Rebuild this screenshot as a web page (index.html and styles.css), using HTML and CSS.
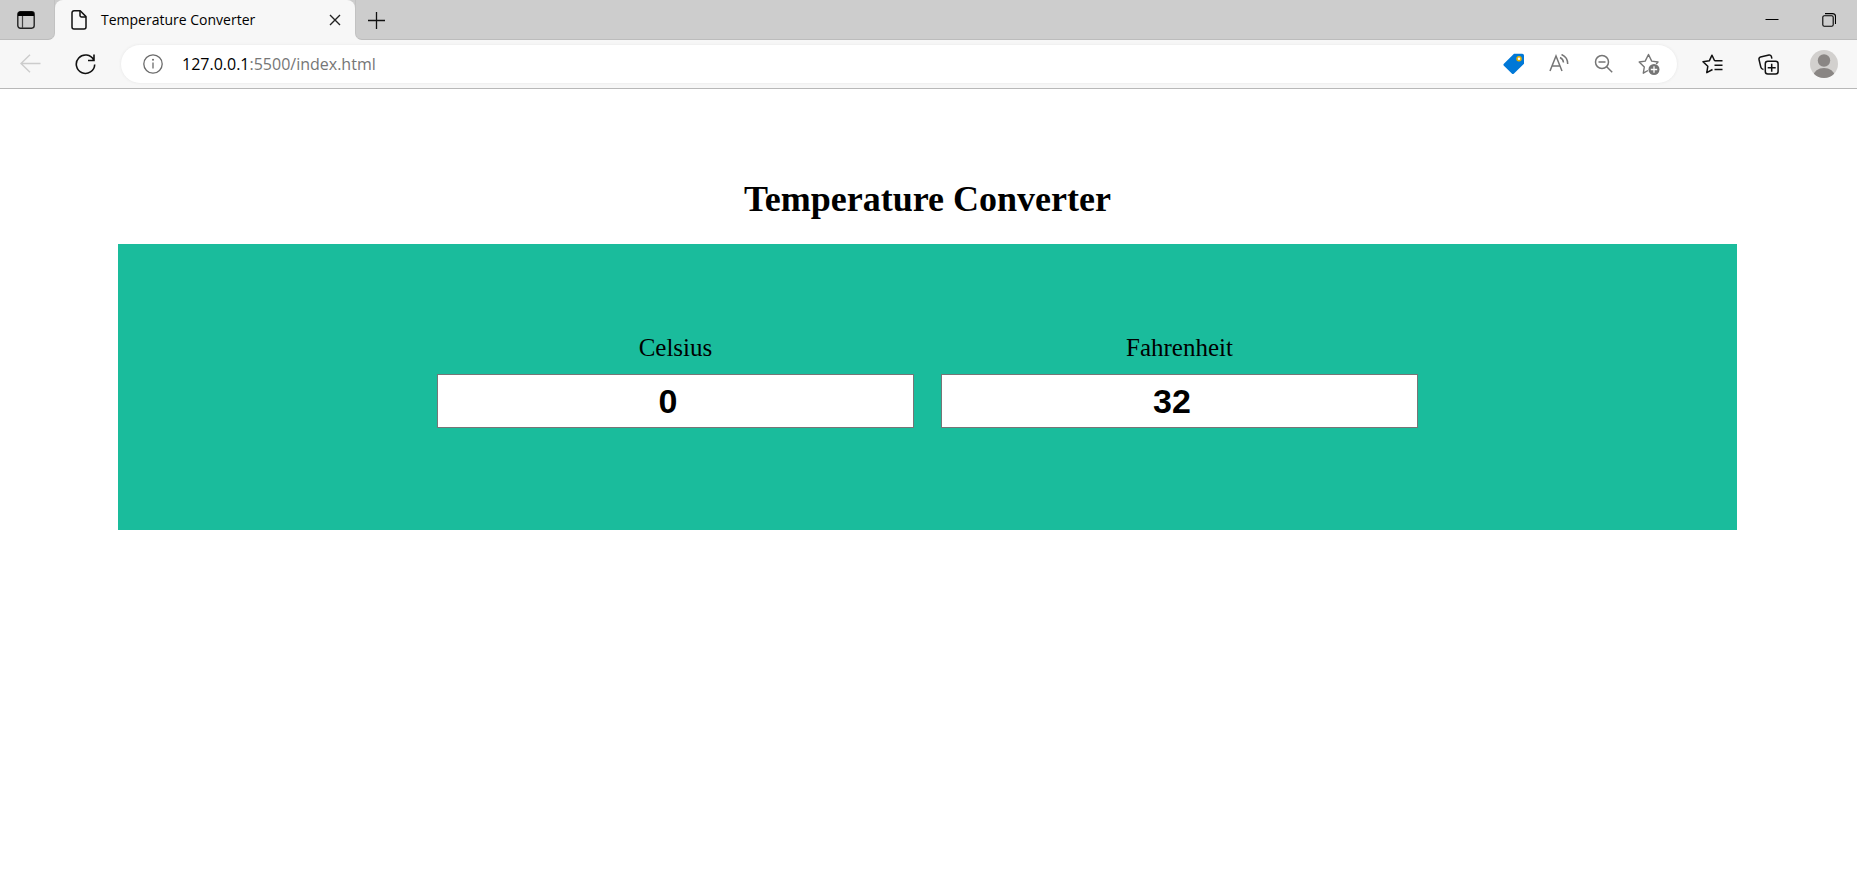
FILE: index.html
```html
<!DOCTYPE html>
<html lang="en">
<head>
<meta charset="utf-8">
<title>Temperature Converter</title>
<link rel="stylesheet" href="styles.css">
</head>
<body>
<header class="browser">
  <div class="tab-strip">
    <div class="strip-start">
      <button class="icon-button" type="button" aria-label="Tab actions">
        <svg width="18" height="18" viewBox="0 0 18 18"><rect x="0.8" y="0.8" width="16.4" height="16.4" rx="2.6" fill="none" stroke="#222" stroke-width="1.4"/><path d="M1 5V3a2.500 2.500 0 0 1 2.500-2.500h11A2.500 2.500 0 0 1 17 3v2z" fill="#000"/><path d="M5.500 5v12" stroke="#444" stroke-width="1.200"/></svg>
      </button>
    </div>
    <div class="tab">
      <svg width="16" height="20" viewBox="0 0 16 20" fill="none" stroke="#111" stroke-width="1.500" stroke-linejoin="round"><path d="M3 .8h6.200L15 6.600V17a2 2 0 0 1-2 2H3a2 2 0 0 1-2-2V2.800a2 2 0 0 1 2-2z"/><path d="M9 1v4.500a1.500 1.500 0 0 0 1.500 1.500H15"/></svg>
      <span class="tab-title">Temperature Converter</span>
      <button class="tab-close" type="button" aria-label="Close tab">
        <svg width="12" height="12" viewBox="0 0 12 12"><path d="M1 1l10 10M11 1L1 11" stroke="#222" stroke-width="1.400"/></svg>
      </button>
    </div>
    <div class="strip-end">
      <button class="icon-button" type="button" aria-label="New tab">
        <svg width="18" height="18" viewBox="0 0 18 18"><path d="M9.500 1v17M1 9.500h17" stroke="#111" stroke-width="1.300"/></svg>
      </button>
      <div class="window-controls">
        <button class="icon-button window-button" type="button" aria-label="Minimize">
          <svg width="14" height="14" viewBox="0 0 14 14"><path d="M.5 6.500h13" stroke="#000"/></svg>
        </button>
        <button class="icon-button window-button" type="button" aria-label="Restore">
          <svg width="14" height="14" viewBox="0 0 14 14" fill="none" stroke="#000" stroke-width="1.100"><rect x=".8" y="2.800" width="10.400" height="10.400" rx="1.500"/><path d="M3 .6h7.500a3 3 0 0 1 3 3V11"/></svg>
        </button>
      </div>
    </div>
  </div>
  <div class="toolbar">
    <button class="icon-button nav-button" type="button" aria-label="Back" disabled>
      <svg width="21" height="20" viewBox="0 0 21 20" fill="none" stroke="#ccc" stroke-width="1.400"><path d="M20.500 9.500H1.500M10 .8l-9 8.700 9 8.700"/></svg>
    </button>
    <button class="icon-button nav-button" type="button" aria-label="Refresh">
      <svg width="21" height="21" viewBox="0 0 21 21" fill="none" stroke="#111" stroke-width="1.600"><path d="M18.700 6A9.200 9.200 0 1 0 19.700 10.500M19 .5v6h-6"/></svg>
    </button>
    <div class="address-bar">
      <svg width="20" height="20" viewBox="0 0 20 20"><circle cx="10" cy="10" r="9.200" fill="none" stroke="#6b6b6b" stroke-width="1.300"/><path d="M10 8.500v6" stroke="#6b6b6b" stroke-width="1.300"/><circle cx="10" cy="5.800" r="1" fill="#6b6b6b"/></svg>
      <span class="url"><span class="url-host">127.0.0.1</span>:5500/index.html</span>
      <button class="icon-button address-button" type="button" aria-label="Shopping">
        <svg width="22" height="22" viewBox="0 0 22 22"><path d="M11 .8h8.200A1.800 1.800 0 0 1 21 2.600v8.200L11 20.600a1.600 1.600 0 0 1-2.200 0L.9 12.700a1.300 1.300 0 0 1 0-1.900z" fill="#0078d7"/><circle cx="16" cy="5.800" r="2" fill="#fff" stroke="#e8b000" stroke-width="1.500"/></svg>
      </button>
      <button class="icon-button address-button" type="button" aria-label="Read aloud">
        <svg width="20" height="20" viewBox="0 0 20 20" fill="none" stroke="#757575" stroke-width="1.500"><path d="M1 17L7 2l6 15M3 12h8"/><path d="M11 3.500q3.200 1.500 3.500 5M12.500.5q6.200 2.500 6.200 9.500"/></svg>
      </button>
      <button class="icon-button address-button" type="button" aria-label="Zoom out">
        <svg width="20" height="20" viewBox="0 0 20 20" fill="none" stroke="#757575" stroke-width="1.500"><circle cx="8" cy="8" r="6.500"/><path d="M4.500 8h7M12.700 12.700l5.500 5.500"/></svg>
      </button>
      <button class="icon-button address-button" type="button" aria-label="Add to favorites">
        <svg width="22" height="22" viewBox="0 0 22 22"><path d="M10 17.500l-4.700 2.700 1-6.200L1.200 9l6-.9L10.500 1.500l3.200 6.600 6.300.9-1.800 2" fill="none" stroke="#757575" stroke-width="1.400" stroke-linejoin="round"/><circle cx="16" cy="16.500" r="5.500" fill="#757575"/><path d="M16 13.300v6.400M12.800 16.500h6.400" stroke="#fff" stroke-width="1.300"/></svg>
      </button>
    </div>
    <div class="toolbar-actions">
      <button class="icon-button action-button" type="button" aria-label="Favorites">
        <svg width="21" height="20" viewBox="0 0 21 20" fill="none" stroke="#111" stroke-width="1.500" stroke-linejoin="round"><path d="M10.500 15.500l-5.700 3.200 1-6.400L1 7.700l6.300-.9L10 1.200l2.600 5.500M12.500 6.700h8M12.500 11.200h8M12.500 15.500h8"/></svg>
      </button>
      <button class="icon-button action-button" type="button" aria-label="Collections">
        <svg width="21" height="21" viewBox="0 0 21 21" fill="none" stroke="#111" stroke-width="1.500" stroke-linejoin="round"><rect x="7.300" y="7.300" width="12.800" height="12.800" rx="2.500"/><path d="M13.700 9.800v8M9.700 13.700h8"/><path d="M5.500 15.500a3 3 0 0 1-2.700-2.300L1 5.500a2 2 0 0 1 1.500-2.400l8.500-2a2 2 0 0 1 2.400 1.500l.5 2"/></svg>
      </button>
      <button class="icon-button action-button" type="button" aria-label="Profile">
        <svg width="28" height="28" viewBox="0 0 28 28"><defs><clipPath id="avatar"><circle cx="14" cy="14" r="14"/></clipPath></defs><g clip-path="url(#avatar)"><path d="M0 0h28v28H0z" fill="#d2d0ce"/><circle cx="14" cy="10.500" r="6.200" fill="#8a8684"/><ellipse cx="14" cy="26" rx="10.500" ry="8" fill="#8a8684"/></g></svg>
      </button>
    </div>
  </div>
</header>
<main class="page">
  <h1 class="title">Temperature Converter</h1>
  <section class="panel">
    <form class="converter">
      <div class="field">
        <label class="field-label" for="celsius">Celsius</label>
        <input class="field-input" id="celsius" type="number" value="0">
      </div>
      <div class="field">
        <label class="field-label" for="fahrenheit">Fahrenheit</label>
        <input class="field-input" id="fahrenheit" type="number" value="32">
      </div>
    </form>
  </section>
</main>
</body>
</html>
```

FILE: styles.css
```css
* {
  box-sizing: border-box;
}

body {
  margin: 0;
  background: #fff;
  color: #000;
  font-family: "Liberation Serif", "Times New Roman", serif;
}

svg {
  display: block;
  flex: none;
}

.browser {
  background: #f7f7f7;
  border-bottom: 1px solid #b8b8b8;
  font-family: "Open Sans", "Segoe UI", sans-serif;
}

.tab-strip {
  display: flex;
  height: 40px;
  background: linear-gradient(#cdcdcd 50%, #f7f7f7 50%);
}

.strip-start,
.strip-end {
  display: flex;
  align-items: center;
  background: #cdcdcd;
  border-bottom: 1px solid #bcbcbc;
}

.strip-start {
  width: 55px;
  padding-left: 17px;
  border-right: 1px solid #c2c2c2;
  border-bottom-right-radius: 7px;
}

.strip-end {
  flex: 1;
  justify-content: space-between;
  padding-left: 11px;
  border-left: 1px solid #c2c2c2;
  border-bottom-left-radius: 7px;
}

.icon-button,
.tab-close {
  display: flex;
  align-items: center;
  justify-content: center;
  padding: 0;
  border: 0;
  background: none;
}

.tab {
  display: flex;
  align-items: center;
  width: 300px;
  padding: 0 14px 0 16px;
  gap: 14px;
  background: #f7f7f7;
  border-radius: 8px 8px 0 0;
}

.tab-title {
  flex: 1;
  font-size: 14px;
  line-height: 20px;
  white-space: nowrap;
}

.window-controls {
  display: flex;
}

.window-button {
  width: 57px;
  height: 38px;
}

.toolbar {
  display: flex;
  align-items: center;
  height: 48px;
  padding: 0 5px 0 3px;
}

.nav-button {
  width: 55px;
  height: 40px;
}

.address-bar {
  display: flex;
  flex: 1;
  align-items: center;
  height: 38px;
  margin: 0 7px 0 8px;
  padding: 0 6px 0 22px;
  border-radius: 19px;
  background: #fff;
  box-shadow: 0 0 3px #e4e4e4;
}

.url {
  flex: 1;
  margin-left: 19px;
  color: #767676;
  font-size: 16px;
  line-height: 24px;
}

.url-host {
  color: #000;
}

.address-button {
  width: 45px;
  height: 32px;
}

.toolbar-actions {
  display: flex;
}

.action-button {
  width: 56px;
  height: 40px;
}

.page {
  padding: 90px 120px 0 118px;
}

.title {
  margin: 0;
  font-size: 36px;
  line-height: 40px;
  text-align: center;
}

.panel {
  display: flex;
  justify-content: center;
  margin-top: 25px;
  padding: 90px 0 102px;
  background: #1abc9c;
}

.converter {
  display: grid;
  grid-template-columns: 1fr 1fr;
  gap: 27px;
  width: 60.6%;
}

.field {
  display: flex;
  flex-direction: column;
  gap: 12px;
}

.field-label {
  font-size: 25px;
  line-height: 28px;
  text-align: center;
}

.field-input {
  width: 100%;
  height: 54px;
  padding: 0;
  border: 1px solid #767676;
  background: #fff;
  color: #000;
  font: bold 34px "Liberation Sans", Arial, sans-serif;
  text-align: center;
}
```
